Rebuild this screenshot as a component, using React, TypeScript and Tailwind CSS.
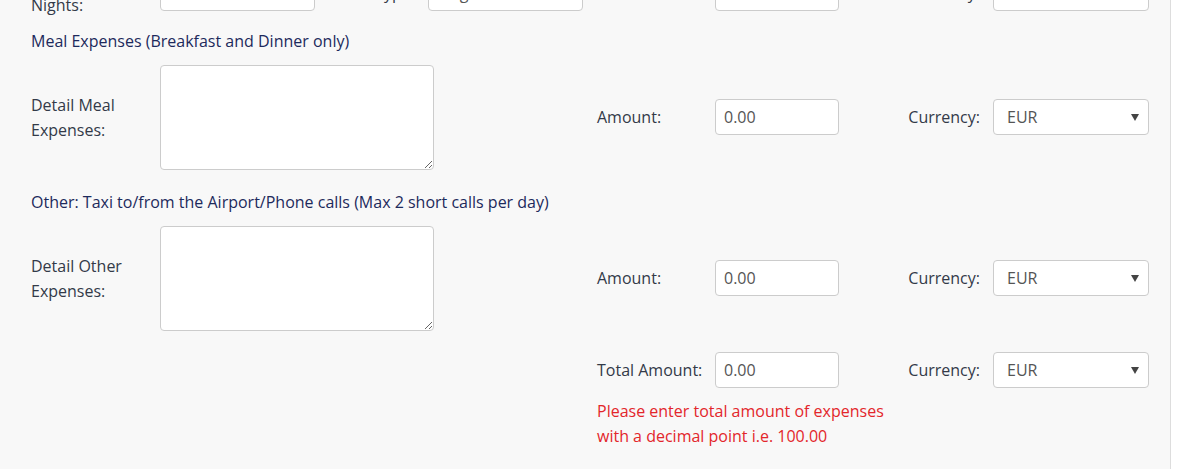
import React from "react";

const FONT = "font-['Open_Sans','Noto_Sans',sans-serif]";

const inputCls =
  "h-[36px] w-full rounded-[4px] border border-[#cccccc] bg-white px-[8px] text-[16px] text-[#555] outline-none";

function CurrencySelect() {
  return (
    <div className="relative h-[36px] w-full">
      <select
        defaultValue="EUR"
        className="h-full w-full appearance-none rounded-[4px] border border-[#cccccc] bg-white pl-[13px] text-[16px] text-[#555] outline-none"
      >
        <option>EUR</option>
        <option>USD</option>
        <option>GBP</option>
      </select>
      <span className="pointer-events-none absolute right-[10px] top-[15px] h-0 w-0 border-x-[4px] border-t-[7px] border-x-transparent border-t-[#444]" />
    </div>
  );
}

function ExpenseRow({ first, second }: { first: string; second: string }) {
  return (
    <div className="grid grid-cols-[129px_274px_163px_118px_124px_154px_156px] items-center">
      <label className="leading-[25px] text-[#333a48]">
        {first}
        <br />
        {second}
      </label>
      <textarea className="h-[105px] w-full rounded-[4px] border border-[#cccccc] bg-white p-2 text-[15px] text-[#555] outline-none" />
      <div />
      <label className="-mt-[2px] text-[#333a48]">Amount:</label>
      <div className="-mt-[2px]">
        <input className={inputCls} defaultValue="0.00" />
      </div>
      <label className="-mt-[2px] pr-[13px] text-right text-[#333a48]">Currency:</label>
      <div className="-mt-[2px]">
        <CurrencySelect />
      </div>
    </div>
  );
}

export default function App() {
  return (
    <div className={`flex h-[469px] overflow-hidden bg-white text-[16px] ${FONT}`}>
      <div className="w-[1171px] shrink-0 overflow-hidden border-r border-[#dddddd] bg-[#f8f8f8] pl-[31px]">
        {/* cut-off accommodation row */}
        <div className="-mt-[32px] grid grid-cols-[129px_155px_113px_155px_14px_118px_124px_154px_156px] items-center">
          <label className="leading-[25px] text-[#333a48]">
            Number of
            <br />
            Nights:
          </label>
          <input className={inputCls} defaultValue="1" />
          <label className="pr-[13px] text-right text-[#333a48]">Room Type:</label>
          <input className={inputCls} defaultValue="Single" />
          <div />
          <label className="text-[#333a48]">Amount:</label>
          <input className={inputCls} defaultValue="0.00" />
          <label className="pr-[13px] text-right text-[#333a48]">Currency:</label>
          <CurrencySelect />
        </div>

        <h3 className="mt-[11px] font-medium leading-[25px] text-[#1d2a5c]">
          Meal Expenses (Breakfast and Dinner only)
        </h3>
        <div className="mt-[11px]">
          <ExpenseRow first="Detail Meal" second="Expenses:" />
        </div>

        <h3 className="mt-[20px] font-medium leading-[25px] text-[#1d2a5c]">
          Other: Taxi to/from the Airport/Phone calls (Max 2 short calls per day)
        </h3>
        <div className="mt-[11px]">
          <ExpenseRow first="Detail Other" second="Expenses:" />
        </div>

        <div className="mt-[21px] grid grid-cols-[129px_274px_163px_118px_124px_154px_156px] items-center">
          <div />
          <div />
          <div />
          <label className="text-[#333a48]">Total Amount:</label>
          <input className={inputCls} defaultValue="0.00" />
          <label className="pr-[13px] text-right text-[#333a48]">Currency:</label>
          <CurrencySelect />
        </div>
        <div className="mt-[11px] grid grid-cols-[129px_274px_163px_320px]">
          <div />
          <div />
          <div />
          <p className="leading-[25px] text-[#e3262b]">
            Please enter total amount of expenses
            <br />
            with a decimal point i.e. 100.00
          </p>
        </div>
      </div>
    </div>
  );
}
